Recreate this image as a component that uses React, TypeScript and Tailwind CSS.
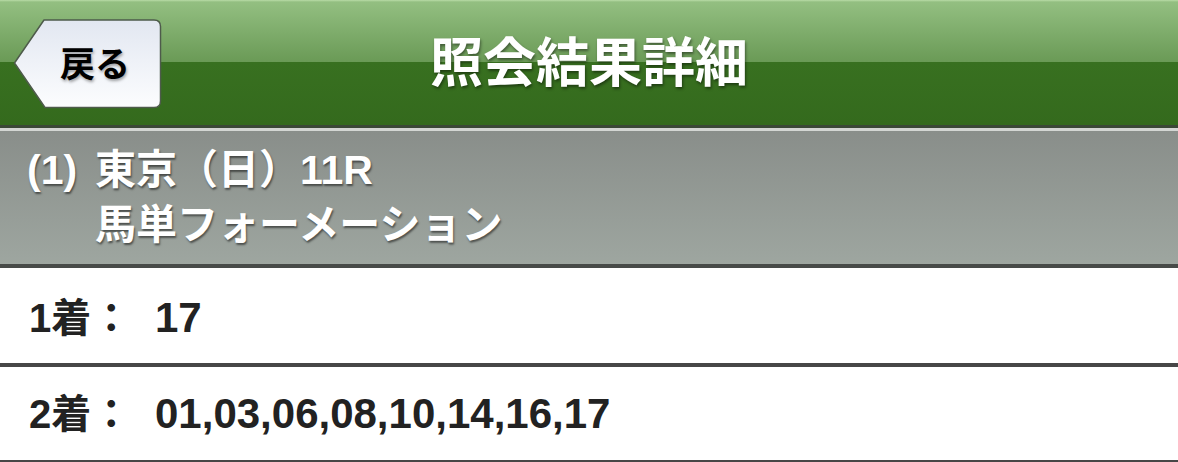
import React from "react";

const font = { fontFamily: '"Liberation Sans", "Noto Sans CJK JP", sans-serif' };

function BackButton() {
  return (
    <div className="absolute left-[13px] top-[18px] w-[150px] h-[92px]">
      <svg width="150" height="92" viewBox="0 0 150 92" className="absolute inset-0">
        <defs>
          <linearGradient id="bb" x1="0" y1="0" x2="0" y2="1">
            <stop offset="0" stopColor="#e2e7f1" />
            <stop offset="1" stopColor="#fcfdfe" />
          </linearGradient>
        </defs>
        <path
          d="M1.5 45 L31 2 H141 Q147.5 2 147.5 8.5 V83 Q147.5 89.5 141 89.5 H32 Z"
          fill="url(#bb)"
          stroke="#4e5b4b"
          strokeWidth="1.5"
          strokeLinejoin="round"
        />
      </svg>
      <div className="absolute inset-0 flex items-center justify-center pl-[14px] pt-[1px]">
        <span className="text-[35px] font-bold text-black leading-none [text-shadow:1px_2px_3px_rgba(0,0,0,0.35)]">
          戻る
        </span>
      </div>
    </div>
  );
}

export default function App() {
  return (
    <div className="w-[1178px] h-[462px] overflow-hidden bg-white flex flex-col" style={font}>
      <div className="relative h-[125px] flex items-center justify-center bg-[linear-gradient(to_bottom,#b9dca7_0px,#93bf81_2px,#6a9a56_62px,#387020_62px,#346a1d_100%)]">
        <BackButton />
        <span className="text-[53px] font-bold text-white leading-none pt-[1px] [text-shadow:1px_2px_3px_rgba(0,0,0,0.45)]">
          照会結果詳細
        </span>
      </div>
      <div className="h-[3px] bg-[#3b4837]" />
      <div className="h-[3px] bg-[#d3d6d3]" />
      <div className="h-[133px] flex pl-[27px] pt-[12px] bg-[linear-gradient(to_bottom,#898e8a,#9ea6a0)] text-white font-bold [text-shadow:1px_2px_2px_rgba(0,0,0,0.5)]">
        <span className="w-[68px] text-[41px] leading-[55px]">(1)</span>
        <div className="flex flex-col text-[41px] leading-[55px]">
          <span>東京（日）11R</span>
          <span>馬単フォーメーション</span>
        </div>
      </div>
      <div className="h-[4px] bg-[#474a48]" />
      <div className="h-[95px] flex items-center pl-[29px] pt-[4px] text-[#222] font-bold leading-none">
        <span className="w-[126px] text-[40px]">1着：</span>
        <span className="text-[42px]">17</span>
      </div>
      <div className="h-[4px] bg-[#474747]" />
      <div className="h-[93px] flex items-center pl-[29px] pt-[1px] text-[#222] font-bold leading-none">
        <span className="w-[126px] text-[40px]">2着：</span>
        <span className="text-[42px]">01,03,06,08,10,14,16,17</span>
      </div>
      <div className="h-[2px] bg-[#474747]" />
    </div>
  );
}
